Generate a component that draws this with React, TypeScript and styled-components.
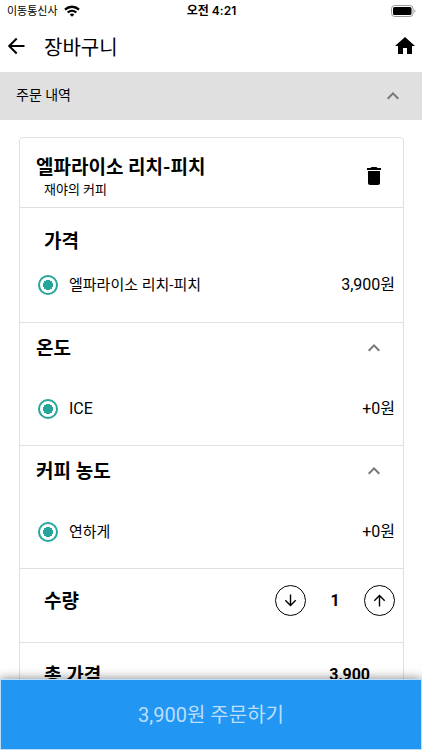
import React, { useState } from "react";
import styled, { createGlobalStyle } from "styled-components";
import { MdDelete, MdExpandLess, MdHome } from "react-icons/md";

const GlobalStyle = createGlobalStyle`
  *, *::before, *::after { box-sizing: border-box; }
  body {
    margin: 0;
    background: #fff;
    color: #000;
    font-family: Roboto, "Noto Sans CJK KR", sans-serif;
  }
  button, input { font: inherit; color: inherit; }
  h1, h2, h3, p { margin: 0; }
`;

const Screen = styled.div`
  display: flex;
  flex-direction: column;
  height: 100vh;
  overflow: hidden;
`;

const StatusBar = styled.div`
  display: grid;
  grid-template-columns: 1fr auto 1fr;
  align-items: center;
  flex: none;
  height: 22px;
  padding: 0 6px 0 7px;
  font-family: Inter, "Noto Sans CJK KR", sans-serif;
  font-size: 12px;
  line-height: 20px;
`;

const Carrier = styled.span`
  display: flex;
  align-items: center;
  gap: 6px;
  font-size: 11px;
`;

const Clock = styled.span`
  font-weight: 600;
`;

const BatterySlot = styled.span`
  display: flex;
  justify-content: flex-end;
`;

const AppBar = styled.header`
  display: flex;
  align-items: center;
  flex: none;
  height: 50px;
  padding: 0 5px 2px 4px;
`;

const AppTitle = styled.h1`
  flex: 1;
  padding: 3px 0 0 16px;
  font-size: 20px;
  font-weight: 400;
  line-height: 28px;
`;

const IconButton = styled.button<{ $muted?: boolean }>`
  display: flex;
  flex: none;
  padding: 0;
  border: 0;
  background: none;
  color: ${(p) => (p.$muted ? "#757575" : "#000")};
  cursor: pointer;
`;

const OrderHeader = styled.div`
  display: flex;
  align-items: center;
  justify-content: space-between;
  flex: none;
  height: 48px;
  padding: 0 17px 0 16px;
  background: #e0e0e0;
`;

const OrderTitle = styled.h2`
  padding-bottom: 2px;
  font-size: 14px;
  font-weight: 400;
  line-height: 20px;
`;

const Content = styled.main`
  flex: 1;
  min-height: 0;
  padding: 17px 18px 0 19px;
  overflow: hidden;
`;

const Card = styled.article`
  border: 1px solid #e0e0e0;
  border-radius: 4px;
`;

const Section = styled.section<{ $height: number }>`
  min-height: ${(p) => p.$height}px;
  padding: 0 8px 0 16px;

  & + & {
    border-top: 1px solid #e0e0e0;
  }
`;

const SplitRow = styled.div<{ $top: number }>`
  display: flex;
  align-items: center;
  justify-content: space-between;
  padding: ${(p) => p.$top}px 9px 0 0;
`;

const Heading = styled.h3<{ $inset?: boolean }>`
  padding: 2px 0 0 ${(p) => (p.$inset ? 8 : 0)}px;
  font-size: 19px;
  font-weight: 700;
  line-height: 26px;
`;

const PriceHeading = styled(Heading)`
  padding-top: 21px;
`;

const Cafe = styled.p`
  padding-left: 8px;
  font-size: 13px;
  line-height: 18px;
`;

const OptionRow = styled.label<{ $gap: number }>`
  display: flex;
  align-items: center;
  height: 24px;
  margin-top: ${(p) => p.$gap}px;
  font-size: 16px;
  line-height: 24px;
`;

const Radio = styled.input`
  appearance: none;
  flex: none;
  width: 20px;
  height: 20px;
  margin: 0 11px 0 2px;
  border: 2px solid #26a69a;
  border-radius: 50%;
  background: #fff;

  &:checked {
    background: radial-gradient(circle, #26a69a 5px, #fff 5px);
  }
`;

const OptionName = styled.span<{ $latin?: boolean }>`
  flex: 1;
  font-size: ${(p) => (p.$latin ? 16 : 15)}px;
`;

const QuantityRow = styled.div`
  display: flex;
  align-items: center;
  justify-content: space-between;
  padding-top: 16px;
`;

const Stepper = styled.div`
  display: flex;
  align-items: center;
`;

const StepButton = styled.button`
  display: flex;
  align-items: center;
  justify-content: center;
  width: 31px;
  height: 31px;
  padding: 0;
  border: 1px solid #000;
  border-radius: 50%;
  background: #fff;
  cursor: pointer;
`;

const Count = styled.output`
  width: 58px;
  font-size: 16px;
  font-weight: 700;
  line-height: 24px;
  text-align: center;
`;

const TotalRow = styled.div`
  display: flex;
  align-items: center;
  justify-content: space-between;
  padding: 18px 25px 0 0;
`;

const Total = styled.strong`
  font-size: 16px;
  font-weight: 700;
  line-height: 24px;
`;

const OrderBar = styled.footer`
  position: relative;
  flex: none;
  padding: 1px;
  background: #bbdefb;
  box-shadow: 0 0 10px rgba(0, 0, 0, 0.5);
`;

const OrderButton = styled.button`
  display: block;
  width: 100%;
  height: 69px;
  padding: 0;
  border: 0;
  background: #2196f3;
  color: #bbdefb;
  font-size: 20px;
  line-height: 28px;
  cursor: pointer;
`;

const WifiIcon = () => (
  <svg width="16" height="12" viewBox="0 0 16 12" fill="none" stroke="#000" strokeWidth="2.3" aria-hidden="true">
    <path d="M1 4.600C5 .8 11 .8 15 4.600" />
    <path d="M3.700 7.500c2.500-2.300 6.100-2.300 8.600 0" />
    <path d="M8 11.700 5.700 9.400c1.300-1.200 3.300-1.200 4.600 0z" fill="#000" stroke="none" />
  </svg>
);

const BatteryIcon = () => (
  <svg width="25" height="12" viewBox="0 0 25 12" aria-hidden="true">
    <rect x=".5" y=".5" width="21.500" height="11" rx="3.200" fill="none" stroke="#999" />
    <rect x="2" y="2" width="18.500" height="8" rx="1.600" fill="#000" />
    <path d="M23.300 4.200c1.500.6 1.500 3 0 3.600z" fill="#999" />
  </svg>
);

const BackIcon = () => (
  <svg width="24" height="24" viewBox="0 0 24 24" fill="none" stroke="#000" strokeWidth="2" aria-hidden="true">
    <path d="M20.500 12H5.500M12.700 4.500 5.200 12l7.500 7.500" />
  </svg>
);

const StepIcon = ({ up }: { up?: boolean }) => (
  <svg width="13" height="13" viewBox="0 0 13 13" fill="none" stroke="#000" strokeWidth="1.400" aria-hidden="true">
    <path d={up ? "M6.500 12.500V1.500M1.300 6.700 6.500 1.500l5.200 5.200" : "M6.500.5v11M1.300 6.300l5.200 5.200 5.200-5.200"} />
  </svg>
);

type Choice = { title: string; name: string; price: string; latin?: boolean };

const choices: Choice[] = [
  { title: "온도", name: "ICE", price: "+0원", latin: true },
  { title: "커피 농도", name: "연하게", price: "+0원" },
];

const UNIT_PRICE = 3900;

export default function App() {
  const [count, setCount] = useState(1);
  const total = (UNIT_PRICE * count).toLocaleString("en-US");

  return (
    <>
      <GlobalStyle />
      <Screen>
        <StatusBar>
          <Carrier>
            이동통신사
            <WifiIcon />
          </Carrier>
          <Clock>오전 4:21</Clock>
          <BatterySlot>
            <BatteryIcon />
          </BatterySlot>
        </StatusBar>

        <AppBar>
          <IconButton aria-label="뒤로">
            <BackIcon />
          </IconButton>
          <AppTitle>장바구니</AppTitle>
          <IconButton aria-label="홈">
            <MdHome size={24} />
          </IconButton>
        </AppBar>

        <OrderHeader>
          <OrderTitle>주문 내역</OrderTitle>
          <IconButton $muted aria-label="주문 내역 접기">
            <MdExpandLess size={24} />
          </IconButton>
        </OrderHeader>

        <Content>
          <Card>
            <Section $height={69}>
              <SplitRow $top={15}>
                <div>
                  <Heading>엘파라이소 리치-피치</Heading>
                  <Cafe>재야의 커피</Cafe>
                </div>
                <IconButton aria-label="삭제">
                  <MdDelete size={24} />
                </IconButton>
              </SplitRow>
            </Section>

            <Section $height={115}>
              <PriceHeading $inset>가격</PriceHeading>
              <OptionRow $gap={18}>
                <Radio type="radio" name="가격" defaultChecked />
                <OptionName>엘파라이소 리치-피치</OptionName>
                <span>3,900원</span>
              </OptionRow>
            </Section>

            {choices.map((choice) => (
              <Section key={choice.title} $height={123}>
                <SplitRow $top={11}>
                  <Heading>{choice.title}</Heading>
                  <IconButton $muted aria-label={`${choice.title} 접기`}>
                    <MdExpandLess size={24} />
                  </IconButton>
                </SplitRow>
                <OptionRow $gap={35}>
                  <Radio type="radio" name={choice.title} defaultChecked />
                  <OptionName $latin={choice.latin}>{choice.name}</OptionName>
                  <span>{choice.price}</span>
                </OptionRow>
              </Section>
            ))}

            <Section $height={74}>
              <QuantityRow>
                <Heading $inset>수량</Heading>
                <Stepper>
                  <StepButton aria-label="수량 줄이기" onClick={() => setCount(Math.max(1, count - 1))}>
                    <StepIcon />
                  </StepButton>
                  <Count>{count}</Count>
                  <StepButton aria-label="수량 늘리기" onClick={() => setCount(count + 1)}>
                    <StepIcon up />
                  </StepButton>
                </Stepper>
              </QuantityRow>
            </Section>

            <Section $height={74}>
              <TotalRow>
                <Heading $inset>총 가격</Heading>
                <Total>{total}</Total>
              </TotalRow>
            </Section>
          </Card>
        </Content>

        <OrderBar>
          <OrderButton>{total}원 주문하기</OrderButton>
        </OrderBar>
      </Screen>
    </>
  );
}
